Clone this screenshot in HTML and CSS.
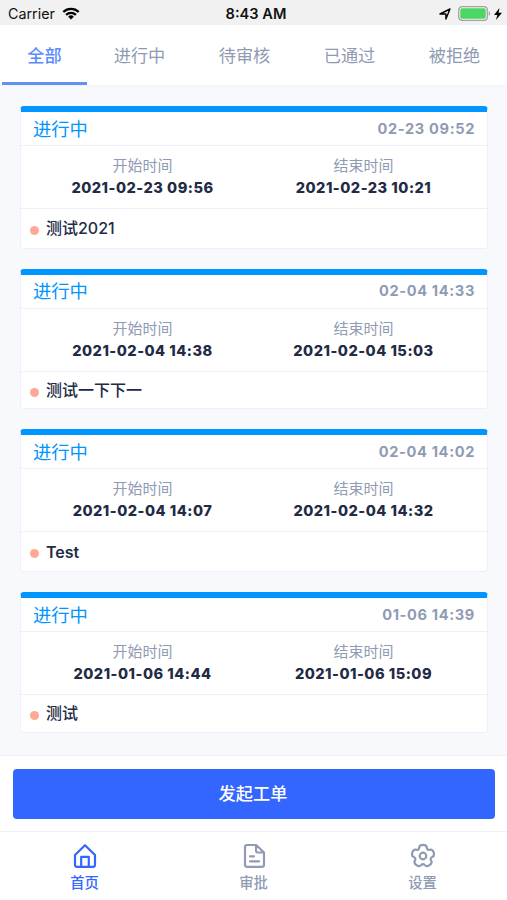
FILE: index.html
```html
<!DOCTYPE html>
<html lang="zh-CN">
<head>
<meta charset="utf-8">
<title>工单</title>
<link rel="stylesheet" href="styles.css">
</head>
<body>
<header class="status">
  <div class="status-left"><span>Carrier</span>
    <svg width="18" height="13" viewBox="0 0 18 13" fill="none" stroke="#000" stroke-width="2.3"><path d="M1.3 5a11 11 0 0 1 15.4 0M4.1 7.9a7 7 0 0 1 9.8 0"/><path d="M9 12.6L6.1 9.7a4.1 4.1 0 0 1 5.8 0z" fill="#000" stroke="none"/></svg>
  </div>
  <div class="status-time">8:43 AM</div>
  <div class="status-right">
    <svg width="12" height="12" viewBox="0 0 12 12" fill="none" stroke="#000" stroke-width="1.4" stroke-linejoin="round"><path d="M1 6L11 1 6.9 11V6z"/></svg>
    <svg class="battery" width="33" height="15" viewBox="0 0 33 15"><rect x=".7" y=".7" width="28.6" height="13.6" rx="3.4" fill="#f1f1f1" stroke="#a3a3a3" stroke-width="1.3"/><rect x="2.3" y="2.3" width="25.4" height="10.4" rx="1.8" fill="#4cd763"/><path d="M30.8 5c1.6.8 1.6 4.2 0 5z" fill="#999"/></svg>
    <svg width="8" height="12" viewBox="0 0 8 12"><path d="M5.5 0L0 7h3.3L2 12 8 4.8H4.6z"/></svg>
  </div>
</header>
<nav class="tabs">
  <a class="tab active">全部</a><a class="tab">进行中</a><a class="tab">待审核</a><a class="tab">已通过</a><a class="tab">被拒绝</a>
</nav>
<main class="list">
  <article class="card">
    <div class="card-head"><span class="state">进行中</span><time class="stamp">02-23 09:52</time></div>
    <div class="times">
      <div class="period"><span>开始时间</span><time>2021-02-23 09:56</time></div>
      <div class="period"><span>结束时间</span><time>2021-02-23 10:21</time></div>
    </div>
    <div class="card-foot"><i class="dot"></i><span>测试2021</span></div>
  </article>
  <article class="card compact">
    <div class="card-head"><span class="state">进行中</span><time class="stamp">02-04 14:33</time></div>
    <div class="times">
      <div class="period"><span>开始时间</span><time>2021-02-04 14:38</time></div>
      <div class="period"><span>结束时间</span><time>2021-02-04 15:03</time></div>
    </div>
    <div class="card-foot"><i class="dot"></i><span>测试一下下一</span></div>
  </article>
  <article class="card">
    <div class="card-head"><span class="state">进行中</span><time class="stamp">02-04 14:02</time></div>
    <div class="times">
      <div class="period"><span>开始时间</span><time>2021-02-04 14:07</time></div>
      <div class="period"><span>结束时间</span><time>2021-02-04 14:32</time></div>
    </div>
    <div class="card-foot"><i class="dot"></i><span class="latin">Test</span></div>
  </article>
  <article class="card compact">
    <div class="card-head"><span class="state">进行中</span><time class="stamp">01-06 14:39</time></div>
    <div class="times">
      <div class="period"><span>开始时间</span><time>2021-01-06 14:44</time></div>
      <div class="period"><span>结束时间</span><time>2021-01-06 15:09</time></div>
    </div>
    <div class="card-foot"><i class="dot"></i><span>测试</span></div>
  </article>
</main>
<section class="action"><button class="primary">发起工单</button></section>
<footer class="bottom-nav">
  <a class="nav-item active">
    <svg width="26" height="26" viewBox="0 0 26 26"><path d="M3 12L13 2.200l10 9.800v9.800a2 2 0 0 1-2 2H5a2 2 0 0 1-2-2zM9.200 23.500v-9.700h7.600v9.700"/></svg>
    <span>首页</span></a>
  <a class="nav-item">
    <svg width="26" height="26" viewBox="0 0 26 26"><path d="M15.2 2H6a2 2 0 0 0-2 2v17.800a2 2 0 0 0 2 2h15a2 2 0 0 0 2-2V9.500zM15 2v5.500a2 2 0 0 0 2 2h6M9 13.300h4M9 18.300h9"/></svg>
    <span>审批</span></a>
  <a class="nav-item">
    <svg width="26" height="26" viewBox="0 0 26 26"><path d="M13 1.780Q16.650 1.780 16.880 4.560Q17.110 7.340 19.830 6.700Q22.550 6.060 23.680 9.530Q24.800 13 22.230 14.080Q19.660 15.160 21.100 17.550Q22.550 19.940 19.600 22.080Q16.650 24.220 14.830 22.110Q13 20 11.170 22.110Q9.350 24.220 6.400 22.080Q3.450 19.940 4.900 17.550Q6.340 15.160 3.770 14.080Q1.200 13 2.320 9.530Q3.450 6.060 6.170 6.700Q8.890 7.340 9.120 4.560Q9.350 1.780 13 1.780Z"/><circle cx="13" cy="13" r="3.3"/></svg>
    <span>设置</span></a>
</footer>
</body>
</html>
```

FILE: styles.css
```css
* { box-sizing: border-box; }
body {
  margin: 0;
  height: 900px;
  display: flex;
  flex-direction: column;
  overflow: hidden;
  background: #f7f9fc;
  color: #222b45;
  font-family: Inter, "Noto Sans CJK SC", sans-serif;
}
.status {
  height: 25px;
  padding: 2px 5px 0 8px;
  display: grid;
  grid-template-columns: 1fr auto 1fr;
  align-items: center;
  background: #f1f1f1;
  color: #111;
  font-size: 14.3px;
}
.status-left, .status-right { display: flex; align-items: center; }
.status-left { gap: 7px; }
.status-time { font-weight: 600; font-size: 14.6px; padding-left: 2px; }
.status-right { justify-content: flex-end; gap: 7px; }
.status-right .battery { margin-right: -4px; }
.tabs {
  height: 61px;
  padding: 0 0 0 1px;
  display: grid;
  grid-template-columns: 86px repeat(4, 1fr);
  background: #fff;
  border-bottom: 1px solid #f0f3f8;
}
.tab {
  padding-top: 18px;
  text-align: center;
  line-height: 25px;
  font-size: 17.2px;
  color: #8f9bb3;
}
.tab.active {
  margin-left: 1px;
  color: #598bff;
  font-weight: 500;
  border-bottom: 3px solid #6490ef;
}
.list {
  height: 669px;
  padding: 20px 19px 0 20px;
  display: flex;
  flex-direction: column;
  gap: 20px;
}
.card {
  height: 142.8px;
  flex: none;
  display: flex;
  flex-direction: column;
  overflow: hidden;
  background: #fff;
  border: 1px solid #edf1f7;
  border-top: 6px solid #0095ff;
  border-radius: 4px;
}
.card.compact { height: 140.6px; }
.card-head {
  height: 34px;
  padding: 0 12px;
  display: flex;
  align-items: center;
  justify-content: space-between;
  border-bottom: 1px solid #edf1f7;
}
.state { color: #0095ff; font-size: 18.3px; line-height: 30px; }
.stamp { color: #8f9bb3; font-size: 14.6px; font-weight: 700; letter-spacing: .65px; }
.times {
  height: 63px;
  padding: 9px 13px 0 11px;
  display: grid;
  grid-template-columns: 1fr 1fr;
  border-bottom: 1px solid #edf1f7;
}
.period {
  display: flex;
  flex-direction: column;
  align-items: center;
  font-size: 15px;
  line-height: 22px;
  color: #8f9bb3;
}
.period time { font-size: 14.6px; font-weight: 800; letter-spacing: .5px; color: #222b45; }
.card-foot {
  flex: 1;
  padding: 0 9px;
  display: flex;
  align-items: center;
  gap: 7px;
  font-size: 16px;
  font-weight: 500;
  line-height: 24px;
}
.latin { font-weight: 600; }
.dot { width: 9px; height: 9px; margin-top: 4px; border-radius: 50%; background: #ffa994; }
.action {
  height: 76px;
  padding: 13px 12px 12px 13px;
  background: #fff;
  border-top: 1px solid #edf1f7;
}
.primary {
  width: 100%;
  height: 50px;
  padding: 0 2px 3px 0;
  border: 0;
  border-radius: 4px;
  background: #3366ff;
  color: #fff;
  font: 500 17.2px Inter, "Noto Sans CJK SC", sans-serif;
}
.bottom-nav {
  height: 69px;
  padding-top: 11px;
  display: grid;
  grid-template-columns: repeat(3, 1fr);
  background: #fff;
  border-top: 1px solid #edf1f7;
}
.nav-item {
  display: flex;
  flex-direction: column;
  align-items: center;
  gap: 3px;
  color: #8f9bb3;
  font-size: 14.3px;
  font-weight: 500;
  line-height: 22px;
}
.nav-item.active { color: #3366ff; }
.nav-item svg { fill: none; stroke: currentColor; stroke-width: 2.2; stroke-linejoin: round; stroke-linecap: round; }
```
